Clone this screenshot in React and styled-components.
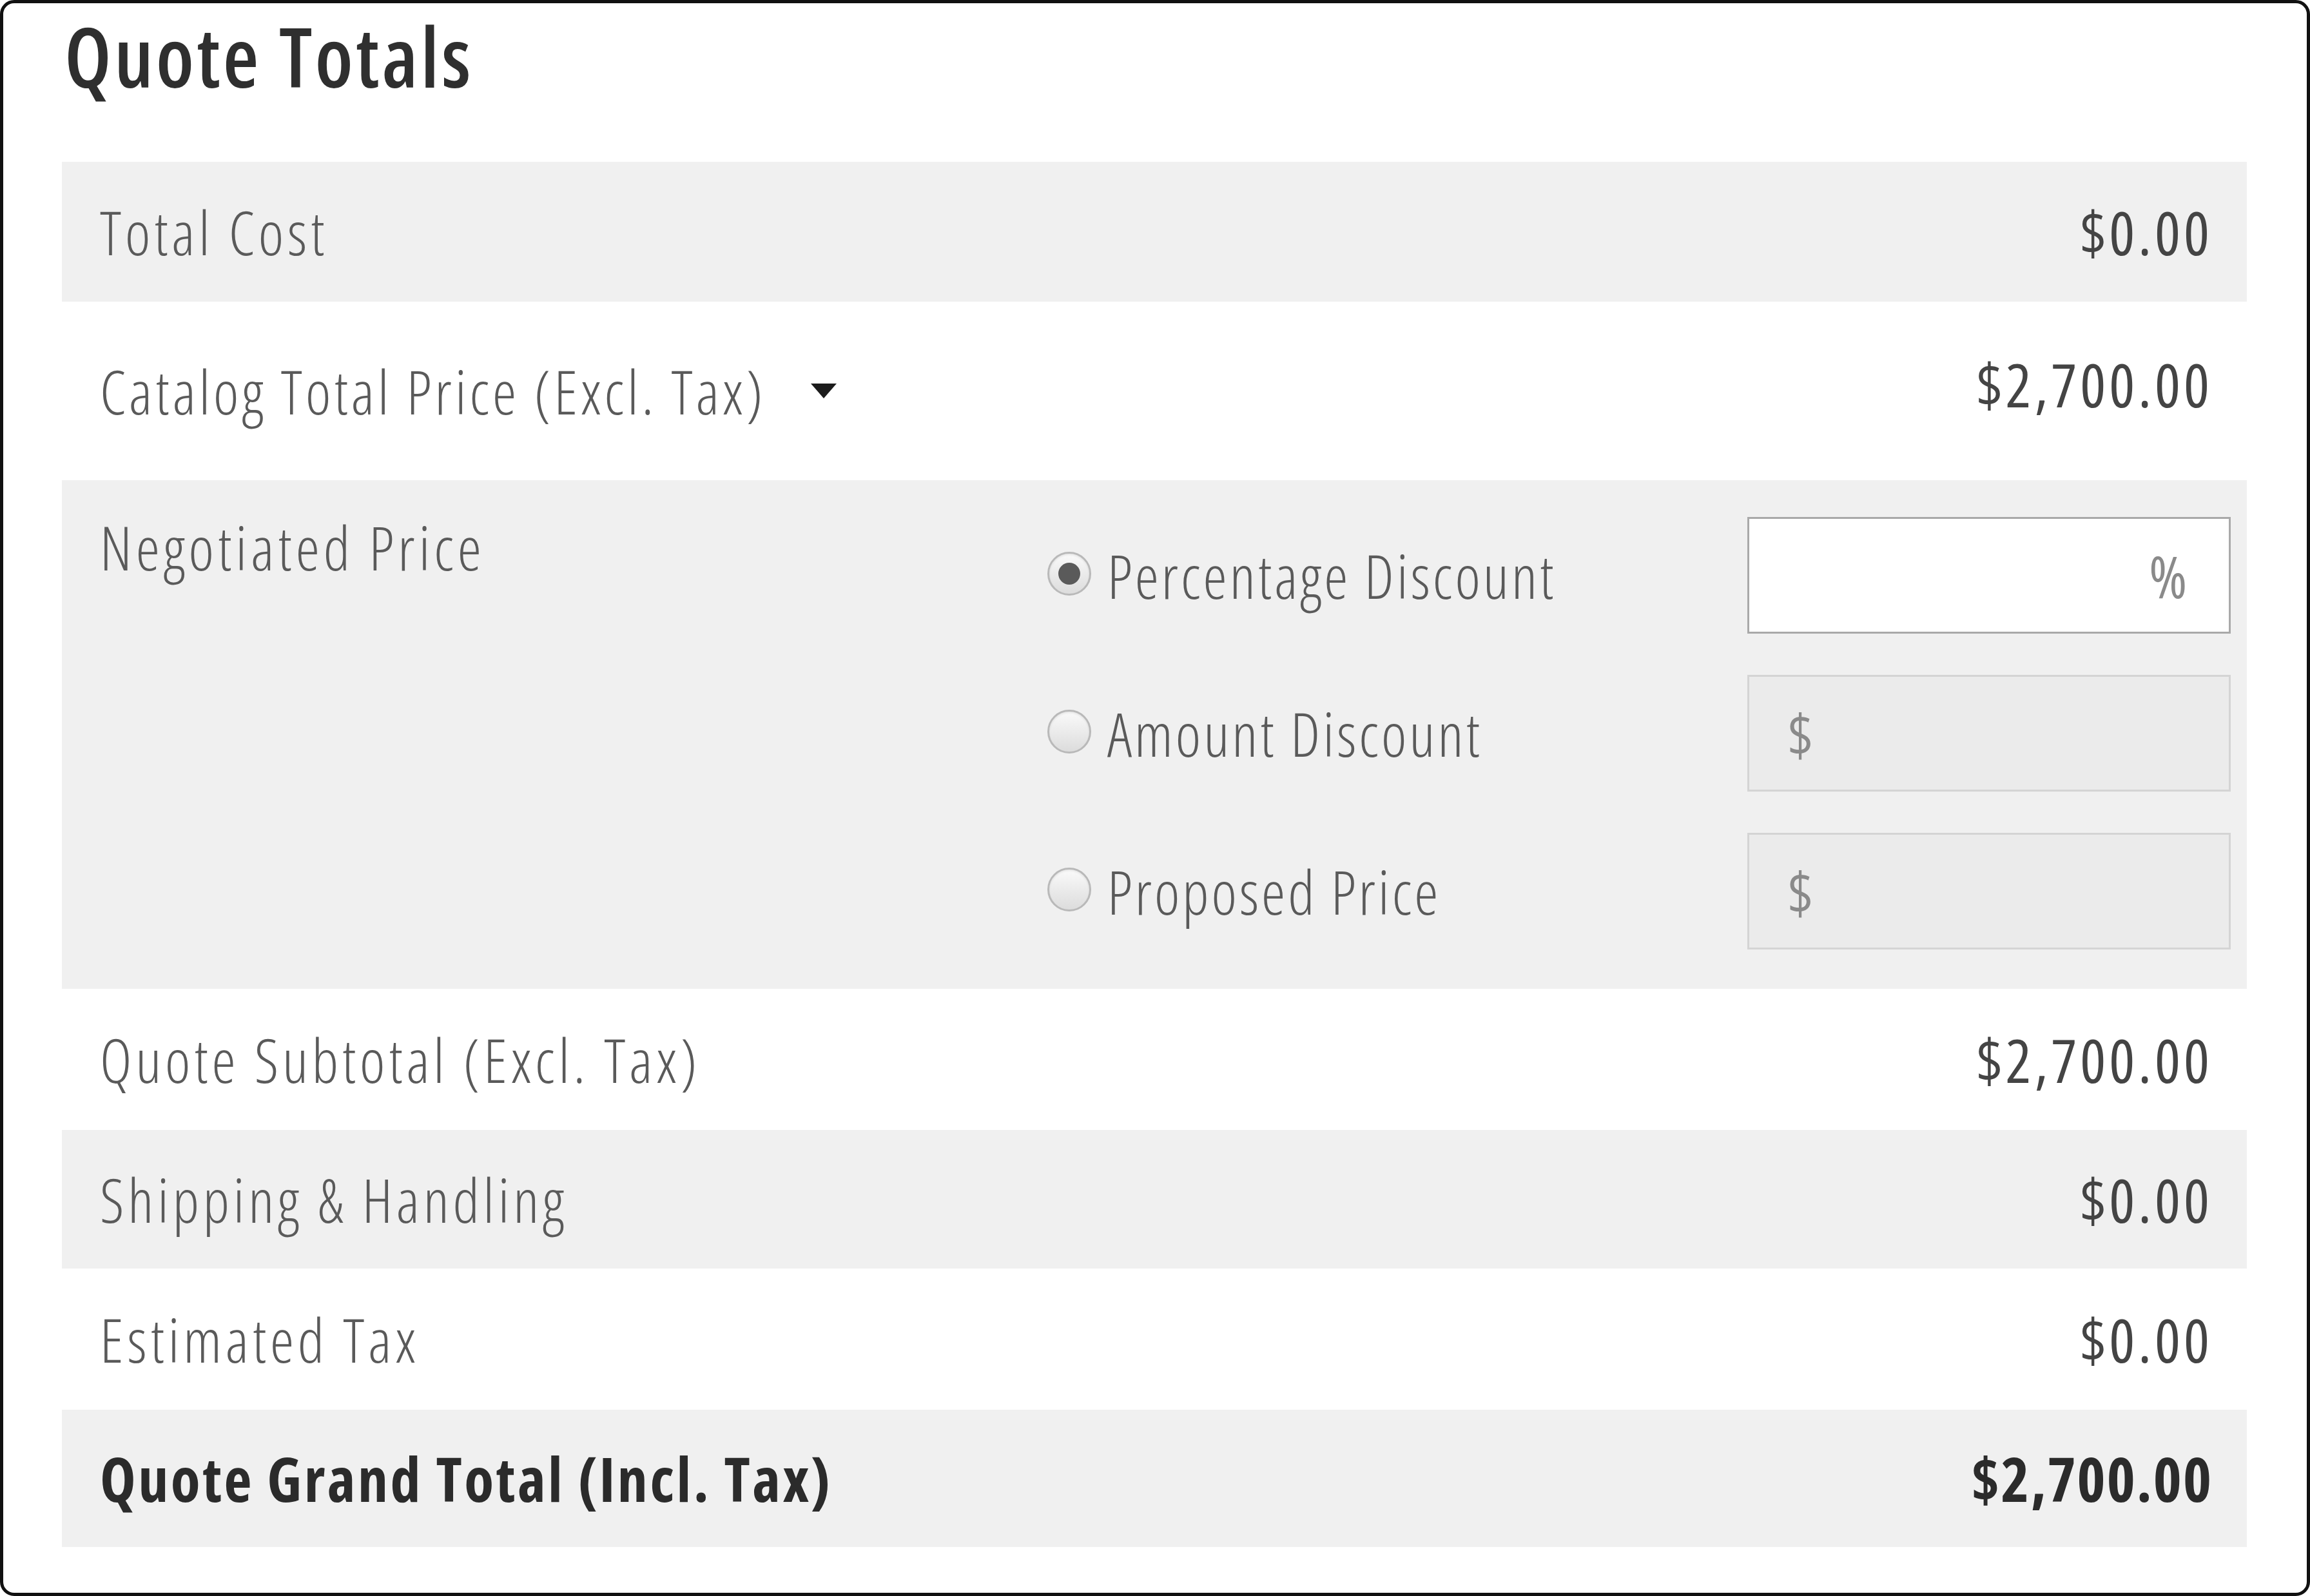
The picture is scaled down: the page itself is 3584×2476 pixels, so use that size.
import React from 'react';
import styled, { createGlobalStyle } from 'styled-components';

const GlobalStyle = createGlobalStyle`
  html, body {
    margin: 0;
    padding: 0;
    background: #ffffff;
  }
  body {
    font-family: 'Open Sans', 'Liberation Sans', sans-serif;
    font-stretch: 75%;
  }
`;

const rows = [
  { label: 'Total Cost', value: '$0.00', shade: true, height: 217 },
  { label: 'Catalog Total Price (Excl. Tax)', value: '$2,700.00', height: 277, caret: true },
  { negotiated: true, shade: true, height: 789 },
  { label: 'Quote Subtotal (Excl. Tax)', value: '$2,700.00', height: 219 },
  { label: 'Shipping & Handling', value: '$0.00', shade: true, height: 215 },
  { label: 'Estimated Tax', value: '$0.00', height: 219 },
  { label: 'Quote Grand Total (Incl. Tax)', value: '$2,700.00', shade: true, height: 213, strong: true },
];

const options = [
  { label: 'Percentage Discount', checked: true, suffix: '%' },
  { label: 'Amount Discount', prefix: '$' },
  { label: 'Proposed Price', prefix: '$' },
];

const App = () => {
  return (
    <>
      <GlobalStyle />
      <Panel>
        <Title>Quote Totals</Title>
        <Table>
          {rows.map((row, i) =>
            row.negotiated ? (
              <NegotiatedRow key={i} $shade={row.shade} $height={row.height}>
                <NegotiatedLabel>Negotiated Price</NegotiatedLabel>
                <Options>
                  {options.map((opt) => (
                    <Option key={opt.label}>
                      <RadioLabel>
                        <Radio $checked={opt.checked} />
                        <span>{opt.label}</span>
                      </RadioLabel>
                      <Field $active={opt.checked} $alignRight={!!opt.suffix}>
                        {opt.suffix || opt.prefix}
                      </Field>
                    </Option>
                  ))}
                </Options>
              </NegotiatedRow>
            ) : (
              <Row key={i} $shade={row.shade} $height={row.height}>
                <Label $strong={row.strong} $tight={row.caret}>
                  {row.label}
                  {row.caret && <Caret />}
                </Label>
                <Value $strong={row.strong} $lift={row.caret}>
                  {row.value}
                </Value>
              </Row>
            )
          )}
        </Table>
      </Panel>
    </>
  );
};

const Panel = styled.div`
  box-sizing: border-box;
  width: 3584px;
  height: 2476px;
  border: 5px solid #111111;
  border-radius: 22px;
  padding: 18px 93px 0 91px;
  background: #ffffff;
`;

const Title = styled.h2`
  margin: 0 0 100px 4px;
  font-weight: 600;
  font-size: 128px;
  line-height: 128px;
  letter-spacing: 4px;
  color: #2f2f2f;
`;

const Table = styled.div`
  display: flex;
  flex-direction: column;
`;

const Row = styled.div`
  display: flex;
  align-items: center;
  justify-content: space-between;
  height: ${(p) => p.$height}px;
  padding: 0 53px 0 59px;
  background: ${(p) => (p.$shade ? '#f0f0f0' : '#ffffff')};
  font-size: 94px;
`;

const Label = styled.div`
  display: flex;
  align-items: center;
  font-weight: ${(p) => (p.$strong ? 700 : 350)};
  letter-spacing: ${(p) => (p.$strong ? 3.5 : p.$tight ? 5 : 5.8)}px;
  color: ${(p) => (p.$strong ? '#2b2b2b' : '#5a5a5a')};
`;

const Value = styled.div`
  font-weight: ${(p) => (p.$strong ? 700 : 400)};
  letter-spacing: ${(p) => (p.$strong ? 2 : 5)}px;
  color: ${(p) => (p.$strong ? '#2b2b2b' : '#444444')};
  margin-bottom: ${(p) => (p.$lift ? 22 : 0)}px;
`;

const Caret = styled.span`
  display: inline-block;
  width: 0;
  height: 0;
  margin-left: 70px;
  border-left: 20px solid transparent;
  border-right: 20px solid transparent;
  border-top: 23px solid #1c1c1c;
`;

const NegotiatedRow = styled.div`
  display: grid;
  grid-template-columns: 1470px 1fr;
  box-sizing: border-box;
  height: ${(p) => p.$height}px;
  padding: 0 25px 0 59px;
  background: ${(p) => (p.$shade ? '#f0f0f0' : '#ffffff')};
  font-size: 94px;
  font-weight: 350;
`;

const NegotiatedLabel = styled.div`
  padding-top: 40px;
  letter-spacing: 6px;
  color: #5a5a5a;
`;

const Options = styled.div`
  display: flex;
  flex-direction: column;
  gap: 64px;
  padding-top: 57px;
`;

const Option = styled.div`
  display: flex;
  align-items: center;
  justify-content: space-between;
`;

const RadioLabel = styled.label`
  display: flex;
  align-items: center;
  gap: 25px;
  letter-spacing: 4px;
  color: #5a5a5a;
`;

const Radio = styled.span`
  position: relative;
  box-sizing: border-box;
  width: 68px;
  height: 68px;
  margin-top: -6px;
  border-radius: 50%;
  border: 3px solid #b9b9b9;
  background: linear-gradient(#fafafa, #dcdcdc);
  box-shadow: inset 0 2px 3px rgba(0, 0, 0, 0.08);

  &::after {
    content: '';
    display: ${(p) => (p.$checked ? 'block' : 'none')};
    position: absolute;
    top: 50%;
    left: 50%;
    width: 34px;
    height: 34px;
    transform: translate(-50%, -50%);
    border-radius: 50%;
    background: #5a5a5a;
  }
`;

const Field = styled.div`
  box-sizing: border-box;
  width: 750px;
  height: 181px;
  display: flex;
  align-items: center;
  justify-content: ${(p) => (p.$alignRight ? 'flex-end' : 'flex-start')};
  padding: 0 62px 0 60px;
  background: ${(p) => (p.$active ? '#ffffff' : '#ebebeb')};
  border: 3px solid ${(p) => (p.$active ? '#a9a9a9' : '#d4d4d4')};
  color: #8a8a8a;
  font-size: 90px;
  font-weight: 400;
  letter-spacing: 3px;
`;

export default App;
